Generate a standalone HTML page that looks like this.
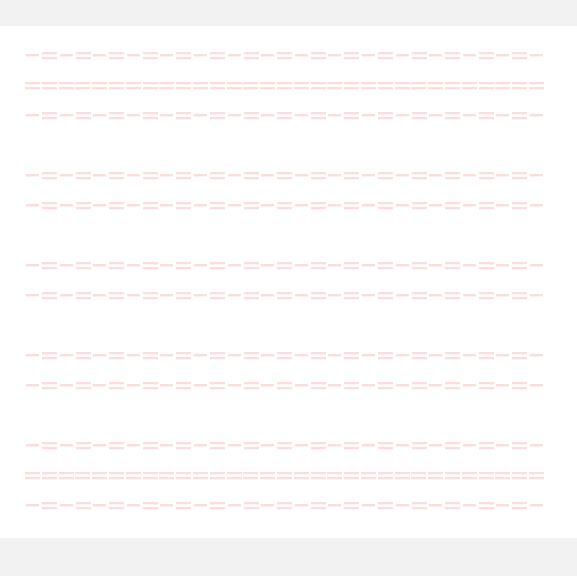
<!DOCTYPE html>
<html><head><style>
html,body{margin:0;padding:0;width:577px;height:576px;background:#f2f2f2;overflow:hidden}
svg{position:absolute;left:0;top:0}
</style></head><body>
<svg width="577" height="576" xmlns="http://www.w3.org/2000/svg">
<rect x="0" y="26" width="577" height="512" fill="#fff"/>
<g fill="#fcdcdc" id="g"></g>
</svg>
<script>
var g=document.getElementById('g'),ns='http://www.w3.org/2000/svg';
function r(x,y,w,h){var e=document.createElementNS(ns,'rect');e.setAttribute('x',x);e.setAttribute('y',y);e.setAttribute('width',w);e.setAttribute('height',h);g.appendChild(e);}
function alt(y){for(var i=0;i<16;i++){var x=Math.round(26+i*33.6);r(x,y-1,13,2.5);if(i<15){r(x+16,y-3,15,2.3);r(x+16,y+2,15,2.3);}}}
function dbl(y){for(var i=0;i<31;i++){var x=Math.round(25+i*16.8);r(x,y-3,15,2.3);r(x,y+2,15,2.3);}}
alt(55);dbl(85);alt(115);alt(175);alt(205);alt(265);alt(295);alt(355);alt(385);alt(445);dbl(475);alt(505);
</script>
</body></html>
